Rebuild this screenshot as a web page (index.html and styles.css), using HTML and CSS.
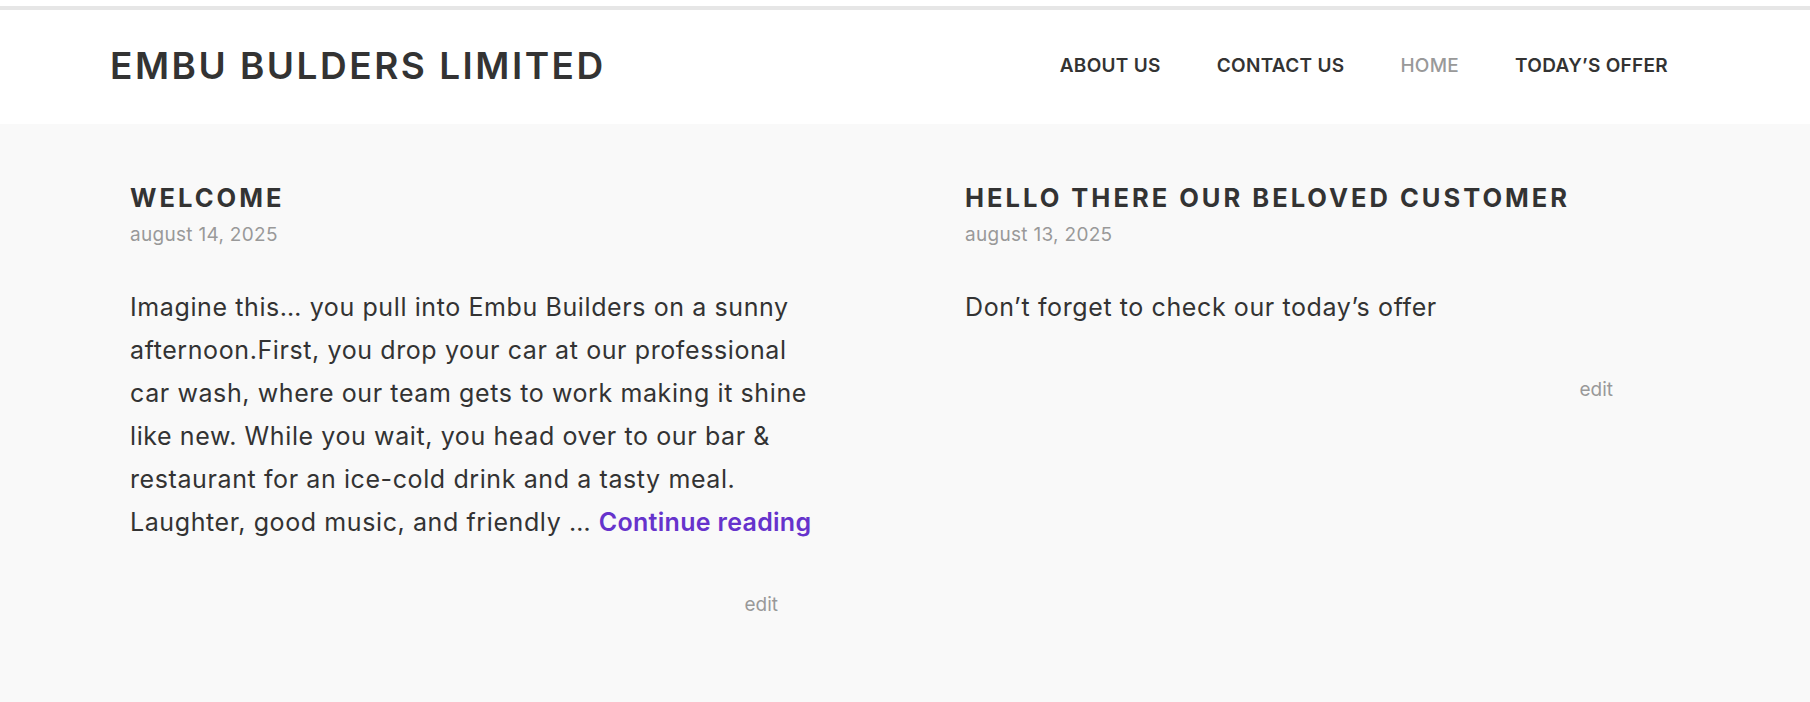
FILE: index.html
```html
<!DOCTYPE html>
<html lang="en">
<head>
<meta charset="utf-8">
<title>Embu Bulders Limited</title>
<link rel="stylesheet" href="styles.css">
</head>
<body>
<div class="top-gap"></div>
<header class="site-header">
  <div class="header-inner">
    <a class="site-title" href="#">Embu Bulders Limited</a>
    <nav class="main-nav">
      <a href="#">About us</a>
      <a href="#">Contact us</a>
      <a href="#" class="current">Home</a>
      <a href="#">Today’s offer</a>
    </nav>
  </div>
</header>
<main class="posts">
  <article class="post">
    <h2 class="post-title">Welcome</h2>
    <div class="post-date">august 14, 2025</div>
    <p class="post-text">Imagine this… you pull into Embu Builders on a sunny afternoon.First, you drop your car at our professional car wash, where our team gets to work making it shine like new. While you wait, you head over to our bar &amp; restaurant for an ice-cold drink and a tasty meal. Laughter, good music, and friendly … <a class="more-link" href="#">Continue reading</a></p>
    <div class="post-edit"><a href="#">edit</a></div>
  </article>
  <article class="post">
    <h2 class="post-title">Hello there our beloved customer</h2>
    <div class="post-date">august 13, 2025</div>
    <p class="post-text">Don’t forget to check our today’s offer</p>
    <div class="post-edit"><a href="#">edit</a></div>
  </article>
</main>
</body>
</html>
```

FILE: styles.css
```css
html, body {
  margin: 0;
  padding: 0;
}
body {
  background: #f9f9f9;
  color: #333;
  font-family: Inter, "Open Sans", "Liberation Sans", sans-serif;
  min-height: 702px;
}
a {
  text-decoration: none;
  color: inherit;
}
.top-gap {
  height: 6px;
  background: #fff;
}
.site-header {
  background: #fff;
  border-top: 4px solid #e6e6e6;
}
.header-inner {
  box-sizing: border-box;
  width: 1590px;
  margin: 0 auto;
  height: 114px;
  padding-bottom: 4px;
  display: flex;
  align-items: center;
  justify-content: space-between;
}
.site-title {
  font-size: 37px;
  font-weight: 600;
  letter-spacing: 2.5px;
  text-transform: uppercase;
  color: #333;
}
.main-nav {
  display: flex;
  gap: 56px;
  padding-right: 32px;
}
.main-nav a {
  font-size: 19px;
  font-weight: 600;
  letter-spacing: 0.3px;
  text-transform: uppercase;
  color: #333;
}
.main-nav a.current {
  color: #999;
  font-weight: 500;
}
.posts {
  display: grid;
  grid-template-columns: 835px 835px;
  padding: 59px 0 40px 130px;
}
.post-title {
  margin: 0;
  font-size: 25.5px;
  line-height: 30px;
  font-weight: 700;
  letter-spacing: 3px;
  text-transform: uppercase;
  color: #333;
}
.post-date {
  margin-top: 10px;
  font-size: 19px;
  line-height: 24px;
  letter-spacing: 0.3px;
  color: #999;
}
.post-text {
  width: 700px;
  margin: 39px 0 0;
  font-size: 25px;
  line-height: 43px;
  letter-spacing: 0.6px;
  color: #333;
}
.more-link {
  color: #6633cc;
  font-weight: 600;
  letter-spacing: 0.3px;
}
.post-edit {
  width: 648px;
  margin-top: 49px;
  text-align: right;
  font-size: 19px;
  line-height: 24px;
}
.post-edit a {
  color: #999;
}
```
